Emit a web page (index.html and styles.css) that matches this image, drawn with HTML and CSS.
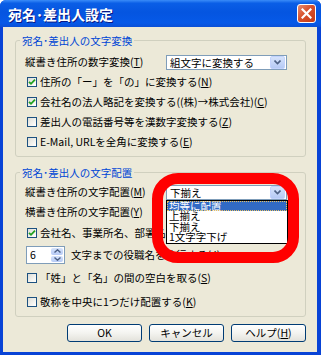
FILE: index.html
```html
<!DOCTYPE html>
<html lang="ja">
<head>
    <meta charset="UTF-8">
    <title>宛名･差出人設定</title>
    <link rel="stylesheet" href="styles.css">
</head>
<body>
    <div class="window">
        <div class="titlebar">
            <span class="title">宛名･差出人設定</span>
            <div class="close">
                <svg width="11" height="11" viewBox="0 0 11 11"><path d="M1.5 1.5 L9.5 9.5 M9.5 1.5 L1.5 9.5" stroke="#fff" stroke-width="2.2" stroke-linecap="square"/></svg>
            </div>
        </div>

        <div class="dialog">
            <!-- 文字変換 -->
            <fieldset class="group first">
                <legend>宛名･差出人の文字変換</legend>
                <div class="row">
                    <span class="label">縦書き住所の数字変換(<u>T</u>)</span>
                    <div class="select">
                        <span class="value">組文字に変換する</span>
                        <span class="drop"><svg width="7" height="5" viewBox="0 0 7 5"><path d="M0.5 0.5 L3.5 3.5 L6.5 0.5" fill="none" stroke="#4d6185" stroke-width="1.6"/></svg></span>
                    </div>
                </div>
                <div class="row check">
                    <span class="box on"><svg width="8" height="8" viewBox="0 0 8 8"><path d="M1 3.8 L3 5.8 L7 1.6" fill="none" stroke="#21a121" stroke-width="1.8"/></svg></span>
                    <span>住所の「ー」を「の」に変換する(<u>N</u>)</span>
                </div>
                <div class="row check">
                    <span class="box on"><svg width="8" height="8" viewBox="0 0 8 8"><path d="M1 3.8 L3 5.8 L7 1.6" fill="none" stroke="#21a121" stroke-width="1.8"/></svg></span>
                    <span>会社名の法人略記を変換する((株)→株式会社)(<u>C</u>)</span>
                </div>
                <div class="row check">
                    <span class="box"></span>
                    <span>差出人の電話番号等を漢数字変換する(<u>Z</u>)</span>
                </div>
                <div class="row check">
                    <span class="box"></span>
                    <span>E-Mail, URLを全角に変換する(<u>E</u>)</span>
                </div>
            </fieldset>

            <!-- 文字配置 -->
            <fieldset class="group second">
                <legend>宛名･差出人の文字配置</legend>
                <div class="row">
                    <span class="label">縦書き住所の文字配置(<u>M</u>)</span>
                    <div class="select open">
                        <span class="value">下揃え</span>
                        <span class="drop"><svg width="7" height="5" viewBox="0 0 7 5"><path d="M0.5 0.5 L3.5 3.5 L6.5 0.5" fill="none" stroke="#4d6185" stroke-width="1.6"/></svg></span>
                        <ul class="list">
                            <li class="selected">均等に配置</li>
                            <li>上揃え</li>
                            <li>下揃え</li>
                            <li>1文字字下げ</li>
                        </ul>
                    </div>
                </div>
                <div class="row">
                    <span class="label">横書き住所の文字配置(<u>Y</u>)</span>
                </div>
                <div class="row check company">
                    <span class="box on"><svg width="8" height="8" viewBox="0 0 8 8"><path d="M1 3.8 L3 5.8 L7 1.6" fill="none" stroke="#21a121" stroke-width="1.8"/></svg></span>
                    <span>会社名、事業所名、部署名を縦書きにする(<u>B</u>)</span>
                </div>
                <div class="row spin-row">
                    <div class="spin">
                        <span class="num">6</span>
                        <span class="arrows">
                            <span class="up"><svg width="7" height="4" viewBox="0 0 7 4"><path d="M0.5 3.5 L3.5 0.8 L6.5 3.5" fill="none" stroke="#4d6185" stroke-width="1.4"/></svg></span>
                            <span class="down"><svg width="7" height="4" viewBox="0 0 7 4"><path d="M0.5 0.5 L3.5 3.2 L6.5 0.5" fill="none" stroke="#4d6185" stroke-width="1.4"/></svg></span>
                        </span>
                    </div>
                    <span>文字までの役職名を改行する(<u>J</u>)</span>
                </div>
                <div class="row check space">
                    <span class="box"></span>
                    <span>「姓」と「名」の間の空白を取る(<u>S</u>)</span>
                </div>
                <div class="row check honor">
                    <span class="box"></span>
                    <span>敬称を中央に1つだけ配置する(<u>K</u>)</span>
                </div>
            </fieldset>

            <div class="buttons">
                <button>OK</button>
                <button>キャンセル</button>
                <button>ヘルプ(<u>H</u>)</button>
            </div>
        </div>

        <!-- 赤丸の注記 -->
        <div class="ring"></div>
    </div>
</body>
</html>
```

FILE: styles.css
```css
body {
    margin: 0;
    font-family: "Noto Sans CJK JP", "Noto Sans", sans-serif;
    font-size: 10.5px;
    color: #000;
    background: #fff;
}

.window {
    position: relative;
    width: 321px;
    height: 355px;
    background: #0843d6;
    display: flex;
    flex-direction: column;
    border-radius: 6px 6px 0 0;
    overflow: hidden;
}

.titlebar {
    height: 27px;
    display: flex;
    align-items: center;
    justify-content: space-between;
    padding: 0 5px 0 8px;
    background: linear-gradient(#3a8cf8 0%, #0a5ee6 12%, #0555e0 45%, #0659e8 85%, #0a4fd6 100%);
}

.title {
    color: #fff;
    font-weight: bold;
    font-size: 14px;
    line-height: 16px;
    text-shadow: 1px 1px #0a1883;
}

.close {
    width: 19px;
    height: 19px;
    box-sizing: border-box;
    border: 1px solid #fff;
    border-radius: 3px;
    background: linear-gradient(135deg, #e78d72 0%, #d8512c 45%, #c43a16 100%);
    display: flex;
    align-items: center;
    justify-content: center;
}

.dialog {
    flex: 1;
    margin: 0 4px 3px 3px;
    background: #ece9d8;
    padding: 7px 11px 0 12px;
    display: flex;
    flex-direction: column;
}

.group {
    margin: 0;
    padding: 5px 0 4px 9px;
    border: 1px solid #d0d0bf;
    border-radius: 3px;
}

.group.second {
    margin-top: 9px;
    padding-top: 3px;
}

legend {
    color: #0046d5;
    line-height: 13px;
    padding: 0 2px;
    margin-left: -5px;
}

.row {
    height: 20px;
    display: flex;
    align-items: center;
    white-space: nowrap;
    line-height: 14px;
}

.row.check {
    padding-left: 2px;
    gap: 3px;
}

.label {
    width: 141px;
}

u {
    text-decoration: underline;
    text-underline-offset: 1px;
}

.box {
    width: 10px;
    height: 10px;
    box-sizing: border-box;
    border: 1px solid #1c5180;
    background: linear-gradient(135deg, #dcdcd7 0%, #f3f3ef 60%, #fff 100%);
    display: flex;
    align-items: center;
    justify-content: center;
    flex-shrink: 0;
}

.select {
    position: relative;
    width: 121px;
    height: 15px;
    box-sizing: border-box;
    border: 1px solid #7f9db9;
    background: #fff;
    display: flex;
    align-items: center;
    justify-content: space-between;
    padding: 0 1px 0 3px;
}

.select .value {
    line-height: 13px;
}

.drop {
    width: 13px;
    height: 11px;
    border-radius: 2px;
    background: linear-gradient(#d6e3fb, #b6caf5);
    border: 1px solid #c3d3fd;
    display: flex;
    align-items: center;
    justify-content: center;
}

.list {
    position: absolute;
    top: 14px;
    left: -1px;
    width: 120px;
    margin: 0;
    padding: 0;
    list-style: none;
    background: #fff;
    border: 1px solid #000;
    z-index: 2;
}

.list li {
    height: 10.5px;
    line-height: 10.5px;
    padding-left: 2px;
    overflow: visible;
}

.list li.selected {
    background: #316ac5;
    color: #fff;
    outline: 1px dotted #e8c060;
    outline-offset: -1px;
}

.company {
    margin-top: 1px;
}

.spin-row {
    margin-top: 2px;
    gap: 6px;
    padding-left: 1px;
}

.spin {
    width: 39px;
    height: 18px;
    box-sizing: border-box;
    border: 1px solid #7f9db9;
    background: #fff;
    display: flex;
    justify-content: space-between;
}

.spin .num {
    padding-left: 3px;
    line-height: 16px;
}

.arrows {
    width: 12px;
    display: flex;
    flex-direction: column;
    padding: 1px 1px 1px 0;
    gap: 1px;
}

.arrows span {
    flex: 1;
    border-radius: 2px;
    background: linear-gradient(#d6e3fb, #b6caf5);
    display: flex;
    align-items: center;
    justify-content: center;
}

.space {
    margin-top: 3px;
}

.honor {
    margin-top: 4px;
}

.buttons {
    display: flex;
    justify-content: flex-end;
    gap: 7px;
    margin-top: 7px;
}

button {
    width: 75px;
    height: 18px;
    padding: 0;
    font-family: inherit;
    font-size: 10.5px;
    line-height: 14px;
    color: #000;
    border: 1px solid #003c74;
    border-radius: 3px;
    background: linear-gradient(#fff 0%, #f4f4f0 50%, #e3e2db 100%);
}

.ring {
    position: absolute;
    left: 152px;
    top: 173px;
    width: 147px;
    height: 90px;
    box-sizing: border-box;
    border: 11px solid #ff0000;
    border-radius: 26px;
    z-index: 5;
}
```
